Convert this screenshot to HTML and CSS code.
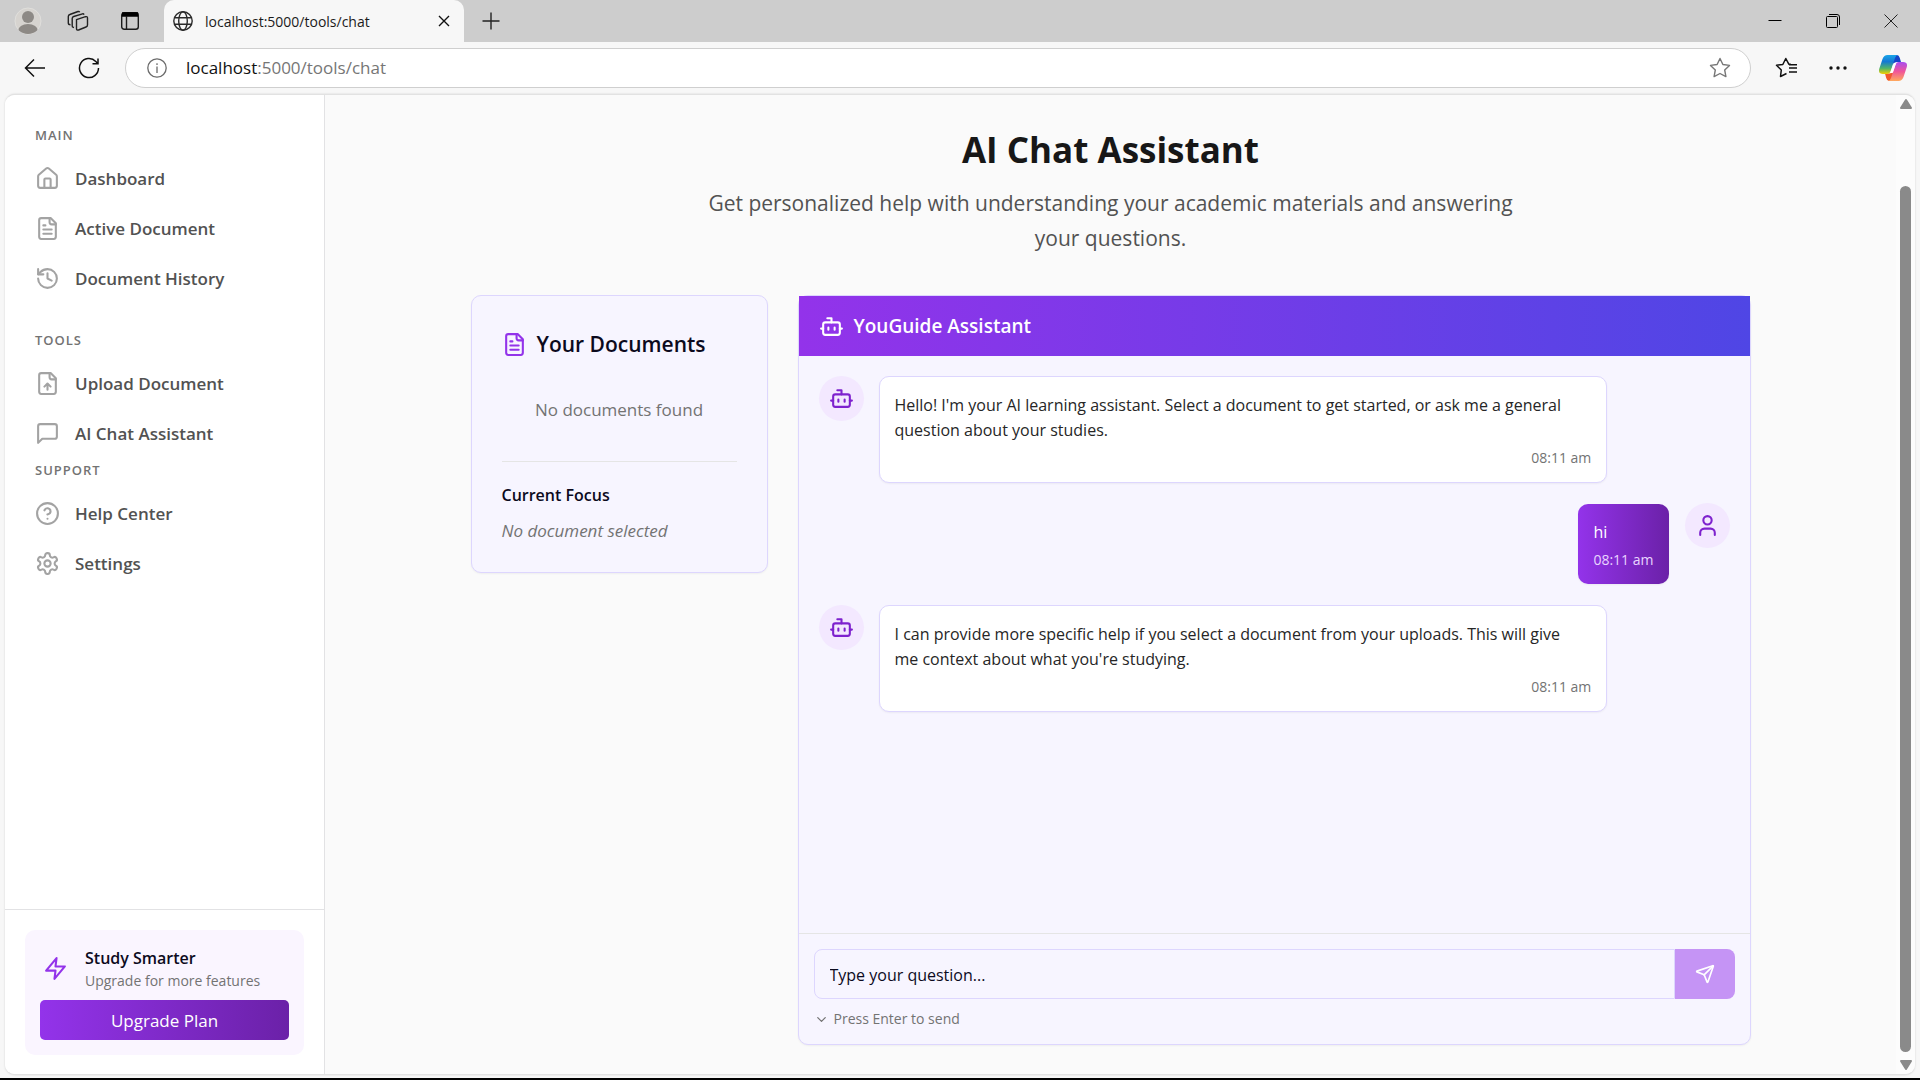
FILE: index.html
```html
<!DOCTYPE html>
<html lang="en">
<head>
<meta charset="utf-8">
<meta name="viewport" content="width=device-width, initial-scale=1">
<title>AI Chat Assistant</title>
<link rel="stylesheet" href="styles.css">
</head>
<body>
<svg class="sprite" aria-hidden="true">
  <symbol id="bot" viewBox="0 0 24 24"><path d="M12 8V4H8"/><rect width="16" height="12" x="4" y="8" rx="2"/><path d="M2 14h2M20 14h2M15 13v2M9 13v2"/></symbol>
  <symbol id="file-text" viewBox="0 0 24 24"><path d="M15 2H6a2 2 0 0 0-2 2v16a2 2 0 0 0 2 2h12a2 2 0 0 0 2-2V7Z"/><path d="M14 2v4a2 2 0 0 0 2 2h4M10 9H8M16 13H8M16 17H8"/></symbol>
</svg>

<header class="tabs">
  <button class="chrome-btn profile" aria-label="Profile"><svg width="28" height="28" viewBox="0 0 28 28"><defs><clipPath id="face"><circle cx="14" cy="14" r="13"/></clipPath></defs><circle cx="14" cy="14" r="13" fill="#d6d3cf" stroke="#e0dfdc"/><g fill="#8d8985" clip-path="url(#face)"><circle cx="14" cy="10" r="6"/><ellipse cx="14" cy="24" rx="10" ry="7"/></g></svg></button>
  <button class="chrome-btn workspaces" aria-label="Workspaces"><svg width="22" height="22" viewBox="0 0 22 22" fill="none" stroke="#222" stroke-width="1.4" stroke-linejoin="round"><path d="M9.500 9.700l9-3q2-.5 2 1.300v7q0 1.500-1.500 2l-7.500 3q-2 .5-2-1.500z"/><path d="M7 17.500l-1-.3q-.8-.3-.8-1.500V8.500q0-1.500 1.500-2L15.500 3.800q1-.3 1.600.8M3.500 14.800q-2.200 0-2.200-1.800V6.500q0-1.500 1.500-2L11 1.500q1.200-.3 1.700.8"/></svg></button>
  <button class="chrome-btn tab-actions" aria-label="Tab actions"><svg width="18" height="18" viewBox="0 0 18 18" fill="none" stroke="#1c1c1c" stroke-width="1.400"><rect x=".7" y=".7" width="16.600" height="16.600" rx="2.500"/><path d="M1 2.500h16" stroke="#000" stroke-width="4.500"/><path d="M5.500 4v13"/></svg></button>
  <div class="tab">
    <svg width="20" height="20" viewBox="0 0 20 20" fill="none" stroke="#2a2a2a" stroke-width="1.400"><circle cx="10" cy="10" r="9.200"/><ellipse cx="10" cy="10" rx="4.300" ry="9.200"/><path d="M1.500 6.700h17M1.500 13.300h17"/></svg>
    <span class="tab-title">localhost:5000/tools/chat</span>
    <button class="chrome-btn" aria-label="Close tab"><svg width="12" height="12" viewBox="0 0 12 12" stroke="#111" stroke-width="1.400"><path d="M1 1l10 10M11 1L1 11"/></svg></button>
  </div>
  <button class="chrome-btn new-tab" aria-label="New tab"><svg width="18" height="18" viewBox="0 0 18 18" stroke="#222" stroke-width="1.400"><path d="M9 .500v17M.500 9h17"/></svg></button>
  <div class="window-controls">
    <button class="chrome-btn" aria-label="Minimize"><svg width="14" height="14" viewBox="0 0 14 14" stroke="#000"><path d="M.500 6.500h13"/></svg></button>
    <button class="chrome-btn" aria-label="Restore"><svg width="14" height="14" viewBox="0 0 14 14" fill="none" stroke="#000"><rect x=".5" y="2.500" width="11" height="11" rx="1"/><path d="M3 .500h8q2.500 0 2.500 2.500v8"/></svg></button>
    <button class="chrome-btn" aria-label="Close window"><svg width="14" height="14" viewBox="0 0 14 14" stroke="#222"><path d="M.500.500l13 13M13.500.500l-13 13"/></svg></button>
  </div>
</header>

<div class="toolbar">
  <button class="chrome-btn" aria-label="Back"><svg width="22" height="20" viewBox="0 0 22 20" fill="none" stroke="#111" stroke-width="1.500"><path d="M21 10H2M10 1.500L1.500 10l8.500 8.500"/></svg></button>
  <button class="chrome-btn reload" aria-label="Refresh"><svg width="22" height="22" viewBox="0 0 22 22" fill="none" stroke="#111" stroke-width="1.500"><path d="M20.500 11A9.500 9.500 0 1 1 17.800 4.400L19.500 6.500M20 1.500v5.200h-5.500"/></svg></button>
  <div class="address">
    <svg width="20" height="20" viewBox="0 0 20 20" fill="none" stroke="#6b6b6b" stroke-width="1.300"><circle cx="10" cy="10" r="9.200"/><path d="M10 8.500v6.500M10 5.300v1.700"/></svg>
    <span class="url"><b>localhost</b>:5000/tools/chat</span>
    <button class="chrome-btn" aria-label="Add to favorites"><svg width="22" height="22" viewBox="0 0 22 22" fill="none" stroke="#777" stroke-width="1.400" stroke-linejoin="round"><path d="M11 1.500l2.900 6 6.600.9-4.800 4.600 1.200 6.600L11 16.500l-5.900 3.100L6.300 13 1.500 8.400l6.600-.9z"/></svg></button>
  </div>
  <button class="chrome-btn" aria-label="Favorites"><svg width="22" height="22" viewBox="0 0 22 22" fill="none" stroke="#111" stroke-width="1.500" stroke-linejoin="round"><path d="M11.500 16.500l-6 3L6.300 13 1.500 8.200l6.300-.7L10.800 1.500l3 5.700h2"/><path d="M14 11h8M14 7.700h8M14 15h8"/></svg></button>
  <button class="chrome-btn" aria-label="More"><svg width="18" height="4" viewBox="0 0 18 4" fill="#111"><circle cx="2" cy="2" r="1.700"/><circle cx="9" cy="2" r="1.700"/><circle cx="16" cy="2" r="1.700"/></svg></button>
  <button class="chrome-btn" aria-label="Copilot"><svg width="28" height="26" viewBox="0 0 28 26"><defs><linearGradient id="c1" x1="0" y1="0" x2="0" y2="1"><stop offset="0" stop-color="#1aa6e8"/><stop offset=".35" stop-color="#1478d4"/><stop offset=".7" stop-color="#4fb46a"/><stop offset="1" stop-color="#f4d000"/></linearGradient><linearGradient id="c2" x1="0" y1="0" x2="0" y2="1"><stop offset="0" stop-color="#a84df0"/><stop offset=".5" stop-color="#f0559a"/><stop offset="1" stop-color="#ffa95c"/></linearGradient></defs><path d="M14 0h4q2 0 2.800 3l1.200 4h-4q-3 0-4 3z" fill="#1646c8"/><path d="M14 26h-4q-2 0-2.800-3L6 18.500h4q3 0 4-3z" fill="#f0592e"/><path d="M8.500 0H19q-2 0-3 3l-4 12q-1 4-4 4H4q-5 0-3.800-5L3.500 4Q5 0 8.500 0z" fill="url(#c1)"/><path d="M19.500 26H9q2 0 3-3l4-12q1-4 4-4h4q5 0 3.800 5l-3.300 10q-1.500 4-5 4z" fill="url(#c2)"/><path d="M14.700 8h2.500l-3.500 10h-2.500z" fill="#fff"/></svg></button>
</div>

<div class="viewport">
  <aside class="sidebar">
    <nav class="nav">
      <h2>MAIN</h2>
      <a href="#"><svg class="icon" viewBox="0 0 24 24"><path d="M15 21v-8a1 1 0 0 0-1-1h-4a1 1 0 0 0-1 1v8"/><path d="M3 10a2 2 0 0 1 .709-1.528l7-5.999a2 2 0 0 1 2.582 0l7 5.999A2 2 0 0 1 21 10v9a2 2 0 0 1-2 2H5a2 2 0 0 1-2-2z"/></svg>Dashboard</a>
      <a href="#"><svg class="icon"><use href="#file-text"/></svg>Active Document</a>
      <a href="#"><svg class="icon" viewBox="0 0 24 24"><path d="M3 12a9 9 0 1 0 9-9 9.750 9.750 0 0 0-6.740 2.740L3 8"/><path d="M3 3v5h5M12 7v5l4 2"/></svg>Document History</a>
      <h2 class="tools">TOOLS</h2>
      <a href="#"><svg class="icon" viewBox="0 0 24 24"><path d="M15 2H6a2 2 0 0 0-2 2v16a2 2 0 0 0 2 2h12a2 2 0 0 0 2-2V7Z"/><path d="M14 2v4a2 2 0 0 0 2 2h4M12 12v6M15 15l-3-3-3 3"/></svg>Upload Document</a>
      <a href="#"><svg class="icon" viewBox="0 0 24 24"><path d="M21 15a2 2 0 0 1-2 2H7l-4 4V5a2 2 0 0 1 2-2h14a2 2 0 0 1 2 2z"/></svg>AI Chat Assistant</a>
      <h2>SUPPORT</h2>
      <a href="#"><svg class="icon" viewBox="0 0 24 24"><circle cx="12" cy="12" r="10"/><path d="M9.090 9a3 3 0 0 1 5.830 1c0 2-3 3-3 3M12 17h.01"/></svg>Help Center</a>
      <a href="#"><svg class="icon" viewBox="0 0 24 24"><path d="M12.220 2h-.44a2 2 0 0 0-2 2v.18a2 2 0 0 1-1 1.730l-.43.25a2 2 0 0 1-2 0l-.15-.08a2 2 0 0 0-2.730.73l-.22.38a2 2 0 0 0 .73 2.730l.15.1a2 2 0 0 1 1 1.720v.51a2 2 0 0 1-1 1.740l-.15.09a2 2 0 0 0-.73 2.730l.22.38a2 2 0 0 0 2.730.73l.15-.08a2 2 0 0 1 2 0l.43.25a2 2 0 0 1 1 1.730V20a2 2 0 0 0 2 2h.44a2 2 0 0 0 2-2v-.18a2 2 0 0 1 1-1.730l.43-.25a2 2 0 0 1 2 0l.15.08a2 2 0 0 0 2.730-.73l.22-.39a2 2 0 0 0-.73-2.730l-.15-.08a2 2 0 0 1-1-1.740v-.5a2 2 0 0 1 1-1.740l.15-.09a2 2 0 0 0 .73-2.730l-.22-.38a2 2 0 0 0-2.730-.73l-.15.08a2 2 0 0 1-2 0l-.43-.25a2 2 0 0 1-1-1.730V4a2 2 0 0 0-2-2z"/><circle cx="12" cy="12" r="3"/></svg>Settings</a>
    </nav>
    <div class="upgrade">
      <div class="upgrade-card">
        <div class="upgrade-info">
          <svg class="icon" viewBox="0 0 24 24"><path d="M13 2L3 14h9l-1 8 10-12h-9z"/></svg>
          <div><strong>Study Smarter</strong><p>Upgrade for more features</p></div>
        </div>
        <button class="upgrade-btn">Upgrade Plan</button>
      </div>
    </div>
  </aside>

  <main class="main">
    <div class="intro">
      <h1>AI Chat Assistant</h1>
      <p>Get personalized help with understanding your academic materials and answering your questions.</p>
    </div>
    <div class="columns">
      <section class="documents">
        <h2><svg class="icon"><use href="#file-text"/></svg>Your Documents</h2>
        <p class="empty">No documents found</p>
        <div class="focus"><h3>Current Focus</h3><p>No document selected</p></div>
      </section>
      <section class="chat">
        <h2 class="chat-head"><svg class="icon"><use href="#bot"/></svg>YouGuide Assistant</h2>
        <div class="messages">
          <div class="message">
            <span class="avatar"><svg class="icon"><use href="#bot"/></svg></span>
            <div class="bubble"><p>Hello! I'm your AI learning assistant. Select a document to get started, or ask me a general question about your studies.</p><time>08:11 am</time></div>
          </div>
          <div class="message mine">
            <span class="avatar"><svg class="icon" viewBox="0 0 24 24"><path d="M19 21v-2a4 4 0 0 0-4-4H9a4 4 0 0 0-4 4v2"/><circle cx="12" cy="7" r="4"/></svg></span>
            <div class="bubble"><p>hi</p><time>08:11 am</time></div>
          </div>
          <div class="message">
            <span class="avatar"><svg class="icon"><use href="#bot"/></svg></span>
            <div class="bubble"><p>I can provide more specific help if you select a document from your uploads. This will give me context about what you're studying.</p><time>08:11 am</time></div>
          </div>
        </div>
        <form class="composer">
          <div class="field">
            <input type="text" aria-label="Your question" placeholder="Type your question...">
            <button type="button" aria-label="Send" disabled><svg class="icon small" viewBox="0 0 24 24"><path d="M14.536 21.686a.5.5 0 0 0 .937-.024l6.500-19a.496.496 0 0 0-.635-.635l-19 6.500a.5.5 0 0 0-.024.937l7.930 3.180a2 2 0 0 1 1.112 1.110z"/><path d="M21.854 2.147l-10.940 10.939"/></svg></button>
          </div>
          <p class="hint"><svg class="icon tiny" viewBox="0 0 24 24"><path d="M6 9l6 6 6-6"/></svg>Press Enter to send</p>
        </form>
      </section>
    </div>
  </main>

  <div class="scrollbar" aria-hidden="true">
    <svg width="14" height="12" viewBox="0 0 14 12"><path d="M7 2l5 8H2z"/></svg>
    <span class="thumb"></span>
    <svg width="14" height="12" viewBox="0 0 14 12"><path d="M7 10L2 2h10z"/></svg>
  </div>
</div>
</body>
</html>
```
FILE: styles.css
```css
* {
  box-sizing: border-box;
  margin: 0;
}

body {
  display: flex;
  flex-direction: column;
  min-height: 100vh;
  border-bottom: 2px solid #000;
  background: #f7f7f7;
  color: #0c0a1d;
  font: 17px/25px "Open Sans", "Noto Sans", sans-serif;
}

button,
input {
  font: inherit;
}

.sprite {
  position: absolute;
  width: 0;
  height: 0;
}

.icon {
  flex: none;
  width: 25px;
  height: 25px;
  fill: none;
  stroke: currentColor;
  stroke-width: 2;
  stroke-linecap: round;
  stroke-linejoin: round;
}

.icon.small {
  width: 20px;
  height: 20px;
}

.icon.tiny {
  width: 15px;
  height: 15px;
}

/* Browser frame */
.chrome-btn {
  display: flex;
  align-items: center;
  justify-content: center;
  padding: 0;
  border: 0;
  background: none;
}

.tabs {
  display: flex;
  align-items: center;
  height: 42px;
  padding-left: 14px;
  background: #cdcdcd;
}

.workspaces {
  margin-left: 25px;
}

.tab-actions {
  margin-left: 32px;
}

.tab {
  display: flex;
  align-items: center;
  gap: 12px;
  width: 300px;
  height: 42px;
  margin-left: 25px;
  padding: 0 14px 0 9px;
  border-radius: 10px 10px 0 0;
  background: #f7f7f7;
  color: #1b1b1b;
  font-size: 14px;
}

.tab-title {
  flex: 1;
}

.new-tab {
  margin-left: 18px;
}

.window-controls {
  display: flex;
  gap: 44px;
  margin-left: auto;
  padding-right: 22px;
}

.toolbar {
  display: flex;
  align-items: center;
  gap: 32px;
  height: 52px;
  padding: 0 13px 1px 24px;
}

.address {
  display: flex;
  flex: 1;
  align-items: center;
  gap: 19px;
  height: 40px;
  margin: 0 -8px 0 -7px;
  padding: 0 19px 0 21px;
  border: 1px solid #cfcfcf;
  border-radius: 20px;
  background: #fff;
}

.url {
  flex: 1;
  color: #767676;
}

.url b {
  color: #111;
  font-weight: 400;
}

/* Page */
.viewport {
  display: flex;
  flex: 1;
  margin: 0 5px 3px;
  overflow: hidden;
  border: 1px solid #e2e2e2;
  border-width: 1px 0;
  border-radius: 10px;
  background: #fafafa;
  box-shadow: 0 0 2px #ccc;
}

.sidebar {
  display: flex;
  flex: none;
  flex-direction: column;
  width: 320px;
  border-right: 1px solid #e2e2e4;
  background: #fff;
}

.nav {
  flex: 1;
  padding: 30px;
}

.nav h2 {
  margin: 2px 0 8px;
  color: #737373;
  font-size: 13px;
  font-weight: 600;
  line-height: 20px;
  letter-spacing: 1px;
}

.nav h2:first-child {
  margin-top: 0;
}

.nav h2.tools {
  margin-top: 27px;
}

.nav a {
  display: flex;
  align-items: center;
  gap: 15px;
  height: 50px;
  color: #525252;
  font-weight: 600;
  text-decoration: none;
}

.nav .icon {
  color: #a3a3a3;
}

.upgrade {
  padding: 20px 20px 19px;
  border-top: 1px solid #e2e2e4;
}

.upgrade-card {
  padding: 16px 15px 15px;
  border-radius: 10px;
  background: #faf5ff;
}

.upgrade-info {
  display: flex;
  align-items: center;
  gap: 17px;
  padding-left: 3px;
}

.upgrade-info .icon {
  color: #9333ea;
}

.upgrade-info strong {
  display: block;
  font-size: 16px;
  font-weight: 600;
}

.upgrade-info p {
  color: #737373;
  font-size: 14px;
  line-height: 20px;
}

.upgrade-btn {
  width: 100%;
  height: 40px;
  margin-top: 9px;
  border: 0;
  border-radius: 5px;
  background: linear-gradient(to right, #9333ea, #6b21a8);
  color: #fff;
}

.main {
  display: flex;
  flex: 1;
  flex-direction: column;
  gap: 39px;
  padding: 32px 30px 29px;
}

.intro {
  color: #525252;
  font-size: 21px;
  line-height: 35px;
  text-align: center;
}

.intro h1 {
  margin-bottom: 14px;
  color: #171717;
  font-size: 35px;
  font-weight: 700;
  line-height: 45px;
}

.intro p {
  max-width: 840px;
  margin: 0 auto;
}

.columns {
  display: grid;
  flex: 1;
  grid-template-columns: 297px 1fr;
  gap: 30px;
  width: 100%;
  max-width: 1280px;
  margin: 0 auto;
}

.documents,
.chat {
  border: 1px solid #ddd6fe;
  border-radius: 10px;
  background: #f7f5ff;
  box-shadow: 0 1px 2px rgba(0, 0, 0, 0.05);
}

.documents {
  align-self: start;
  padding: 30px 30px 29px;
}

.documents h2 {
  display: flex;
  align-items: center;
  gap: 10px;
  font-size: 21px;
  font-weight: 600;
  line-height: 36px;
}

.documents h2 .icon {
  color: #9333ea;
}

.empty {
  padding: 35px 0 39px;
  color: #737373;
  text-align: center;
}

.focus {
  padding-top: 21px;
  border-top: 1px solid #e5e5e5;
}

.focus h3 {
  margin-bottom: 10px;
  font-size: 16px;
  font-weight: 600;
}

.focus p {
  color: #737373;
  font-style: italic;
}

.chat {
  display: flex;
  flex-direction: column;
}

.chat-head {
  display: flex;
  align-items: center;
  gap: 10px;
  height: 60px;
  padding: 0 20px;
  background: linear-gradient(to right, #9333ea, #4f46e5);
  color: #fff;
  font-size: 19px;
  font-weight: 600;
}

.messages {
  display: flex;
  flex: 1;
  flex-direction: column;
  gap: 20px;
  padding: 20px;
}

.message {
  display: flex;
  align-items: flex-start;
  gap: 15px;
}

.avatar {
  display: flex;
  flex: none;
  align-items: center;
  justify-content: center;
  width: 45px;
  height: 45px;
  border-radius: 50%;
  background: #f3e8ff;
  color: #7e22ce;
}

.bubble {
  max-width: 80%;
  padding: 16px 15px 14px;
  border: 1px solid #ddd6fe;
  border-radius: 10px;
  background: #fff;
  box-shadow: 0 1px 2px rgba(0, 0, 0, 0.05);
  color: #262626;
  font-size: 16px;
}

/* Keeps received messages at the full bubble width */
.message:not(.mine) .bubble {
  width: 80%;
}

.bubble p {
  padding-right: 15px;
}

.bubble time {
  display: block;
  margin-top: 5px;
  color: #737373;
  font-size: 14px;
  line-height: 20px;
  text-align: right;
}

.mine {
  flex-direction: row-reverse;
}

.mine .bubble {
  margin: 1px;
  border: 0;
  background: linear-gradient(to right, #9333ea, #6b21a8);
  color: #fff;
}

.mine time {
  color: #e9d5ff;
}

.composer {
  padding: 15px;
  border-top: 1px solid #e5e5e5;
}

.field {
  display: flex;
  height: 50px;
}

.field input {
  flex: 1;
  min-width: 0;
  padding: 2px 15px 0;
  border: 1px solid #ddd6fe;
  border-radius: 8px 0 0 8px;
  background: transparent;
  font-size: 16px;
}

.field input::placeholder {
  color: #0c0a1d;
  opacity: 1;
}

.field button {
  display: flex;
  align-items: center;
  justify-content: center;
  width: 60px;
  border: 0;
  border-radius: 0 8px 8px 0;
  background: #c594f5;
  color: #fff;
}

.hint {
  display: flex;
  align-items: center;
  gap: 5px;
  margin-top: 10px;
  color: #737373;
  font-size: 14px;
  line-height: 20px;
}

.scrollbar {
  display: flex;
  flex: none;
  flex-direction: column;
  align-items: center;
  width: 19px;
  padding: 3px 0;
  background: #fcfcfc;
  fill: #8a8a8a;
  stroke: #8a8a8a;
  stroke-width: 2;
  stroke-linejoin: round;
}

.thumb {
  flex: 1;
  width: 11px;
  margin: 76px 0 7px;
  border-radius: 6px;
  background: #8a8a8a;
}
```
